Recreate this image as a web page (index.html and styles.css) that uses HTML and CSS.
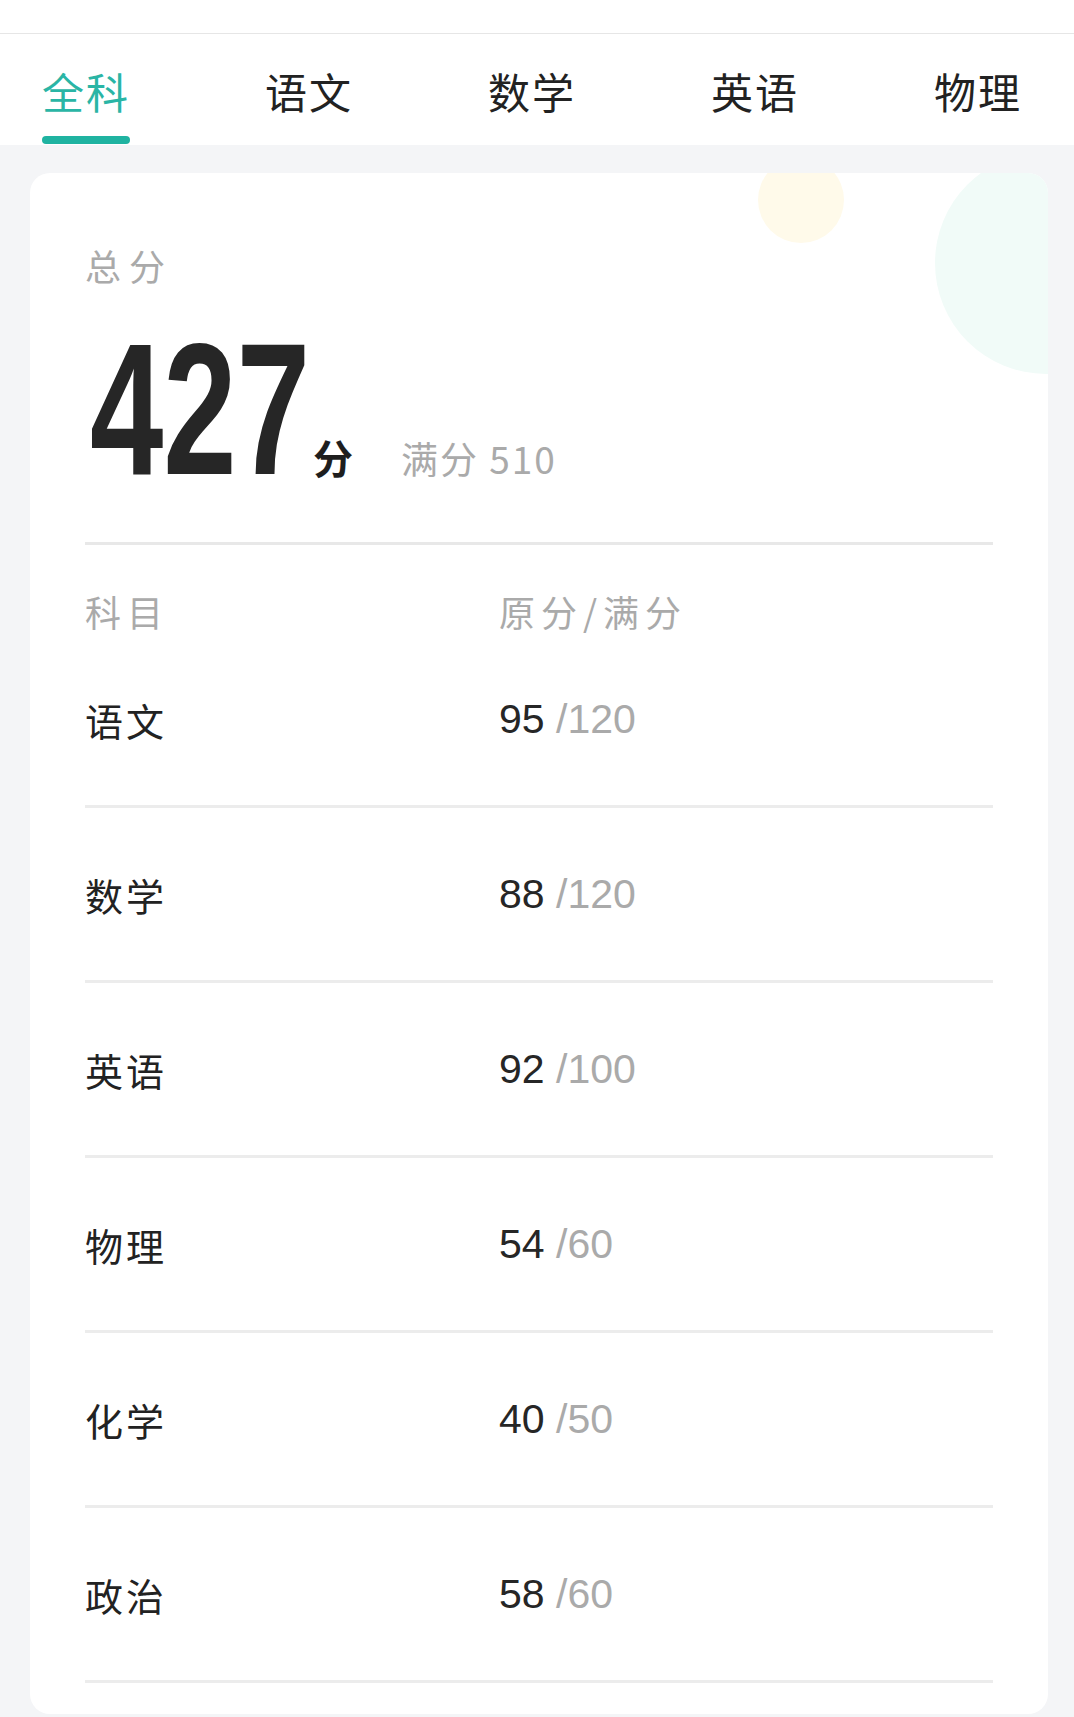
FILE: index.html
```html
<!DOCTYPE html>
<html lang="zh-CN">

<head>
    <meta charset="UTF-8">
    <meta name="viewport" content="width=device-width, initial-scale=1.0">
    <title>成绩</title>
    <link rel="stylesheet" href="styles.css">
</head>

<body>
    <div class="status-bar"></div>

    <div class="tabs">
        <div class="tab active">
            <span class="tab-text">全科</span>
            <span class="tab-line"></span>
        </div>
        <div class="tab">
            <span class="tab-text">语文</span>
            <span class="tab-line"></span>
        </div>
        <div class="tab">
            <span class="tab-text">数学</span>
            <span class="tab-line"></span>
        </div>
        <div class="tab">
            <span class="tab-text">英语</span>
            <span class="tab-line"></span>
        </div>
        <div class="tab">
            <span class="tab-text">物理</span>
            <span class="tab-line"></span>
        </div>
    </div>

    <div class="page">
        <div class="card">
            <div class="bubble bubble-yellow"></div>
            <div class="bubble bubble-green"></div>

            <div class="total-label">总分</div>
            <div class="total">
                <span class="total-num">427</span>
                <span class="total-unit">分</span>
                <span class="total-full">满分 510</span>
            </div>

            <div class="scores">
                <div class="row head">
                    <span class="col-name">科目</span>
                    <span class="col-score">原分/满分</span>
                </div>
                <div class="row">
                    <span class="col-name">语文</span>
                    <span class="col-score">95 <span class="full">/120</span></span>
                </div>
                <div class="row">
                    <span class="col-name">数学</span>
                    <span class="col-score">88 <span class="full">/120</span></span>
                </div>
                <div class="row">
                    <span class="col-name">英语</span>
                    <span class="col-score">92 <span class="full">/100</span></span>
                </div>
                <div class="row">
                    <span class="col-name">物理</span>
                    <span class="col-score">54 <span class="full">/60</span></span>
                </div>
                <div class="row">
                    <span class="col-name">化学</span>
                    <span class="col-score">40 <span class="full">/50</span></span>
                </div>
                <div class="row">
                    <span class="col-name">政治</span>
                    <span class="col-score">58 <span class="full">/60</span></span>
                </div>
            </div>
        </div>
    </div>
</body>

</html>
```

FILE: styles.css
```css
* {
    margin: 0;
    padding: 0;
    box-sizing: border-box;
}

body {
    background-color: #f4f5f7;
    font-family: "Noto Sans CJK SC", "Liberation Sans", sans-serif;
    color: #222;
    height: 1717px;
    overflow: hidden;
}

.status-bar {
    height: 34px;
    background-color: #fff;
    border-bottom: 1px solid #e6e6e6;
}

/* tabs */
.tabs {
    display: flex;
    justify-content: space-between;
    height: 111px;
    padding: 0 52px 0 42px;
    background-color: #fff;
}

.tab {
    display: flex;
    flex-direction: column;
    align-items: stretch;
    padding-top: 32px;
}

.tab-text {
    font-size: 42px;
    line-height: 50px;
    letter-spacing: 2px;
    color: #222;
}

.tab-line {
    height: 8px;
    margin-top: 20px;
    border-radius: 4px;
}

.tab.active .tab-text {
    color: #2ab5a5;
}

.tab.active .tab-line {
    background-color: #1fb3a1;
}

/* card */
.page {
    padding: 28px 26px 0 30px;
}

.card {
    position: relative;
    overflow: hidden;
    background-color: #fff;
    border-radius: 20px;
    padding: 70px 55px 31px;
}

.bubble {
    position: absolute;
    border-radius: 50%;
}

.bubble-yellow {
    left: 728px;
    top: -16px;
    width: 86px;
    height: 86px;
    background-color: #fffaea;
}

.bubble-green {
    left: 905px;
    top: -21px;
    width: 222px;
    height: 222px;
    background-color: #f1fbf8;
}

.total-label {
    position: relative;
    font-size: 36px;
    line-height: 44px;
    letter-spacing: 8px;
    color: #aaa;
}

.total {
    position: relative;
    display: flex;
    align-items: baseline;
    margin-top: 33px;
    height: 182px;
}

.total-num {
    display: inline-block;
    font-family: "Liberation Sans", sans-serif;
    font-weight: bold;
    font-size: 187px;
    line-height: 180px;
    color: #262626;
    transform: scaleX(0.705);
    transform-origin: left bottom;
    margin-left: 5px;
    margin-right: -100px;
}

.total-unit {
    font-size: 40px;
    font-weight: bold;
    color: #1e1e1e;
    margin-left: 11px;
}

.total-full {
    font-size: 37px;
    color: #aaa;
    margin-left: 48px;
    letter-spacing: 2px;
}

/* score table */
.scores {
    position: relative;
    margin-top: 40px;
    border-top: 3px solid #e8e8e8;
}

.row {
    display: flex;
    align-items: center;
    height: 175px;
    border-bottom: 3px solid #ececec;
}

.row.head {
    height: 88px;
    align-items: flex-start;
    padding-top: 45px;
    border-bottom: none;
    font-size: 36px;
    line-height: 43px;
    letter-spacing: 6px;
    color: #aaa;
}

.col-name {
    width: 414px;
    font-size: 38px;
    letter-spacing: 3px;
}

.row.head .col-name,
.row.head .col-score {
    font-size: 36px;
    letter-spacing: 6px;
}

.col-score {
    font-family: "Liberation Sans", sans-serif;
    font-size: 41px;
    color: #262626;
}

.row.head .col-score {
    font-family: "Noto Sans CJK SC", sans-serif;
    color: #aaa;
}

.full {
    color: #aaa;
}
```
